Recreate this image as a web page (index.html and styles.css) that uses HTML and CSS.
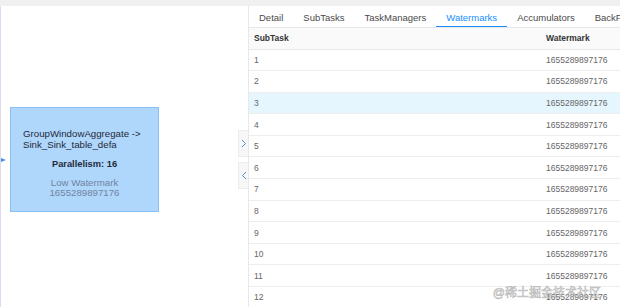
FILE: index.html
```html
<!DOCTYPE html>
<html lang="en">

<head>
    <meta charset="UTF-8">
    <title>Job Vertex Watermarks</title>
    <link rel="stylesheet" href="styles.css">
</head>

<body>
    <div class="topbar"></div>
    <div class="main">
        <div class="canvas">
            <span class="edge-arrow"></span>
            <div class="node">
                <div class="node-name">GroupWindowAggregate -&gt;<br>Sink_Sink_table_defa</div>
                <div class="node-par">Parallelism: 16</div>
                <div class="node-wm">Low Watermark<br>1655289897176</div>
            </div>
            <div class="toggles">
                <button class="toggle">
                    <svg width="6" height="9" viewBox="0 0 6 9"><path d="M1 1l3.5 3.5L1 8" fill="none" stroke="#4a90e2" stroke-width="1"/></svg>
                </button>
                <button class="toggle">
                    <svg width="6" height="9" viewBox="0 0 6 9"><path d="M5 1L1.5 4.5 5 8" fill="none" stroke="#4a90e2" stroke-width="1"/></svg>
                </button>
            </div>
        </div>
        <div class="panel">
            <nav class="tabs">
                <a>Detail</a>
                <a>SubTasks</a>
                <a>TaskManagers</a>
                <a class="active">Watermarks</a>
                <a>Accumulators</a>
                <a>BackPressure</a>
            </nav>
            <table class="wm-table">
                <thead>
                    <tr><th>SubTask</th><th>Watermark</th></tr>
                </thead>
                <tbody id="rows"></tbody>
            </table>
            <div class="stamp">@稀土掘金技术社区</div>
        </div>
    </div>

    <script>
        const body = document.getElementById('rows');
        for (let i = 1; i <= 12; i++) {
            const tr = document.createElement('tr');
            if (i === 3) tr.classList.add('hover');
            tr.innerHTML = `<td>${i}</td><td>1655289897176</td>`;
            body.appendChild(tr);
        }
    </script>
</body>

</html>
```

FILE: styles.css
```css
* {
    box-sizing: border-box;
}

body {
    margin: 0;
    width: 620px;
    height: 307px;
    overflow: hidden;
    font-family: "Helvetica Neue", Arial, "Liberation Sans", "Noto Sans CJK SC", sans-serif;
    background-color: #fff;
    color: #333;
}

.topbar {
    height: 6px;
    background-color: #f0f0f0;
}

.main {
    display: flex;
    height: 301px;
}

/* Graph canvas */
.canvas {
    position: relative;
    width: 248px;
    border-left: 1px solid #dcdcf0;
    display: flex;
    align-items: flex-start;
}

.edge-arrow {
    position: absolute;
    left: 0;
    top: 152px;
    width: 0;
    height: 0;
    border-top: 2px solid transparent;
    border-bottom: 2px solid transparent;
    border-left: 5px solid #4a90e2;
}

.node {
    margin: 101px 0 0 9px;
    width: 149px;
    height: 105px;
    background-color: #afd6fb;
    border: 1px solid #8cc0f3;
    padding-top: 21px;
    font-size: 9.7px;
    line-height: 10.5px;
}

.node-name {
    padding-left: 12px;
    color: #1f2a3a;
}

.node-par {
    margin-top: 9px;
    text-align: center;
    font-weight: bold;
    font-size: 9.3px;
    color: #1f2a3a;
}

.node-wm {
    margin-top: 8px;
    text-align: center;
    color: #6f84a0;
}

.toggles {
    margin: 124px 0 0 auto;
    display: flex;
    flex-direction: column;
    gap: 5px;
}

.toggle {
    width: 10px;
    height: 27px;
    padding: 0;
    border: 1px solid #ececec;
    border-right: none;
    background-color: #f7f7f7;
    display: flex;
    align-items: center;
    justify-content: center;
}

/* Right panel */
.panel {
    position: relative;
    flex: 1;
    border-left: 1px solid #e8e8e8;
    overflow: hidden;
}

.tabs {
    display: flex;
    height: 22px;
    border-bottom: 1px solid #e8e8e8;
    white-space: nowrap;
}

.tabs a {
    padding: 1px 10px 0;
    font-size: 9.5px;
    line-height: 21px;
    color: #4a4a4a;
}

.tabs a.active {
    color: #1890ff;
    border-bottom: 1.5px solid #1890ff;
}

.wm-table {
    width: 100%;
    border-collapse: collapse;
    font-size: 8.5px;
}

.wm-table th {
    height: 21px;
    text-align: left;
    font-weight: 600;
    color: #333;
    background-color: #fafafa;
    border-bottom: 1px solid #e8e8e8;
    padding: 0 5px;
}

.wm-table td {
    height: 21.6px;
    padding: 0 5px;
    color: #666;
    border-bottom: 1px solid #eeeeee;
}

.wm-table th:last-child,
.wm-table td:last-child {
    width: 74px;
    padding-left: 0;
}

.wm-table tr.hover td {
    background-color: #e6f6fe;
}

.stamp {
    position: absolute;
    right: 19px;
    bottom: 7px;
    font-size: 12px;
    color: rgba(255, 255, 255, 0.75);
    -webkit-text-stroke: 0.6px rgba(120, 120, 120, 0.55);
}
```
